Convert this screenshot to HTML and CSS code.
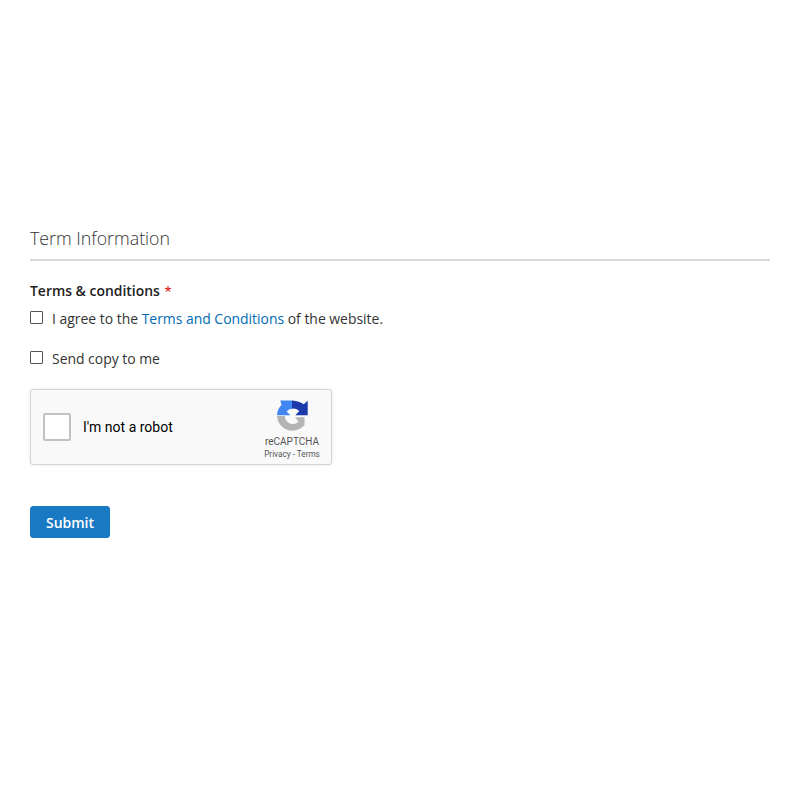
FILE: index.html
```html
<!DOCTYPE html>
<html lang="en">
<head>
<meta charset="utf-8">
<title>Term Information</title>
<link rel="stylesheet" href="styles.css">
</head>
<body>
<form class="form">
  <h2 class="legend">Term Information</h2>
  <div class="label">Terms &amp; conditions <span class="req">*</span></div>
  <label class="check first"><span class="box"></span><span>I agree to the <a href="#">Terms and Conditions</a> of the website.</span></label>
  <label class="check second"><span class="box"></span><span>Send copy to me</span></label>
  <div class="recaptcha">
    <span class="rc-box"></span>
    <span class="rc-text">I'm not a robot</span>
    <div class="rc-brand">
      <svg class="rc-logo" width="31" height="31" viewBox="0 0 31 31">
        <path fill="#b4b4b4" d="M0 16H8A7.800 7.800 0 0 0 21.500 21.500L18 17.500L27.500 17V25A15.500 15.500 0 0 1 0 16Z"/>
        <path fill="#4285f4" d="M0 15.300C.2 11 1.800 7.500 4.600 4.800L3.200 .5H15.300V8.700A7 7 0 0 0 9.600 11.400L13.500 15.300Z"/>
        <path fill="#1c3aa9" d="M15 .5C19.800 .8 23.800 2 26.700 4.300L30.700 .8V15.300H18.300L22.300 11A7.500 7.500 0 0 0 15 8.700Z"/>
      </svg>
      <div class="rc-name">reCAPTCHA</div>
      <div class="rc-links">Privacy - Terms</div>
    </div>
  </div>
  <button class="submit" type="button">Submit</button>
</form>
</body>
</html>
```

FILE: styles.css
```css
html, body { margin: 0; background: #fff; }
body { font-family: "Open Sans", sans-serif; font-size: 13.93px; color: #333; }
.form { display: flex; flex-direction: column; align-items: flex-start; padding: 226px 30px 0; }
.legend { align-self: stretch; margin: 0; padding-bottom: 8px; border-bottom: 2px solid #d8d8d8; font-size: 17.8px; font-weight: 300; line-height: 25px; color: #333; }
.label { margin-top: 20px; font-weight: 600; line-height: 20px; color: #222; }
.req { color: #e02b27; margin-left: 1px; font-size: 13px; }
.check { display: flex; align-items: center; gap: 9px; line-height: 20px; }
.first { margin-top: 8px; }
.second { margin-top: 20px; }
.box { box-sizing: border-box; width: 13px; height: 13px; border: 1px solid #555; border-radius: 1px; background: #fff; margin-top: -4px; }
a { color: #006bb4; text-decoration: none; }
.recaptcha { box-sizing: border-box; display: flex; align-items: center; width: 302px; height: 76px; margin-top: 20px; padding-left: 12px; background: #f9f9f9; border: 1px solid #d3d3d3; border-radius: 3px; box-shadow: 0 0 4px rgba(0,0,0,.08); font-family: Roboto, sans-serif; }
.rc-box { box-sizing: border-box; width: 28px; height: 28px; background: #fff; border: 2px solid #c1c1c1; border-radius: 2px; }
.rc-text { margin-left: 12px; font-size: 14px; color: #000; flex: 1; }
.rc-brand { display: flex; flex-direction: column; align-items: center; align-self: flex-start; width: 70px; margin-right: 4px; padding-top: 10px; color: #555; }
.rc-logo { display: block; margin-bottom: 4px; }
.rc-name { font-size: 10px; line-height: 13px; }
.rc-links { font-size: 8.2px; line-height: 11px; margin-top: 1px; }
.submit { width: 80px; height: 32px; margin-top: 41px; padding: 0; background: #1979c3; border: 1px solid #1979c3; border-radius: 3px; color: #fff; font-family: "Open Sans", sans-serif; font-size: 14px; font-weight: 600; }
```
